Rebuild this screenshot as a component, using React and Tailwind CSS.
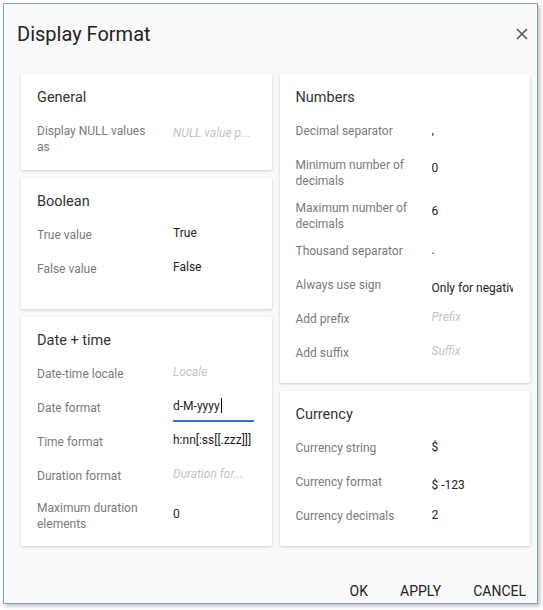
const font = { fontFamily: "Roboto, 'Liberation Sans', sans-serif" };

const Card = ({ title, children, className = "" }) => (
    <div className={"bg-white rounded-[2px] shadow-[0_1px_3px_rgba(0,0,0,0.18)] pt-[14px] px-[16px] pb-[13px] " + className}>
        <div className="h-[20px] leading-[20px] text-[14.5px] text-[#333] mb-[6px]">{title}</div>
        {children}
    </div>
);

const Row = ({ label, children, tall = false, h, labelPad = "pt-[9px]" }) => (
    <div className="flex" style={{ height: h || (tall ? 43 : 34) }}>
        <div
            className={"w-[136px] shrink-0 pr-[14px] flex text-[12px] leading-[16px] text-[#7a7a7a] " + (tall ? "items-start " + labelPad : "items-center")}
        >
            <span>{label}</span>
        </div>
        <div className="w-[81px] h-full flex items-center overflow-hidden whitespace-nowrap text-[12px] leading-[16px]">
            {children}
        </div>
    </div>
);

const Val = ({ children, pad = "pb-[5px]" }) => (
    <div className={"text-[#222] " + pad}>{children}</div>
);

const Ph = ({ children }) => (
    <div className="pb-[5px] text-[#c4c4c4] italic truncate">{children}</div>
);

const App = () => {
    return (
        <div className="w-[543px] h-[610px] bg-white" style={font}>
            <div className="absolute left-[3px] top-[3px] w-[535px] h-[601px] bg-[#f9f9f9] border border-[#7aa0cc] shadow-[2px_2px_4px_rgba(0,0,0,0.25)] flex flex-col">
                <div className="h-[60px] flex items-center justify-between pl-[13px] pr-[8px]">
                    <span className="text-[20px] text-[#222]">Display Format</span>
                    <svg width="12" height="12" viewBox="0 0 12 12" className="mr-[1px]">
                        <path d="M1 1L11 11M11 1L1 11" stroke="#555" strokeWidth="1.6" />
                    </svg>
                </div>
                <div className="pt-[10px] pl-[17px] pr-[7px] grid grid-cols-2 gap-[8px]">
                    <div className="flex flex-col gap-[8px]">
                        <Card title="General">
                            <Row label="Display NULL values as" tall>
                                <Ph>NULL value p...</Ph>
                            </Row>
                        </Card>
                        <Card title="Boolean" className="pb-[23px]">
                            <Row label="True value"><Val>True</Val></Row>
                            <Row label="False value"><Val>False</Val></Row>
                        </Card>
                        <Card title="Date + time" className="flex-1 pb-[11px]">
                            <Row label="Date-time locale"><Ph>Locale</Ph></Row>
                            <Row label="Date format">
                                <div className="w-full h-[24px] mt-[3px] border-b-2 border-[#2f6de0] flex items-start">
                                    <span className="text-[#222]">d-M-yyyy</span>
                                    <span className="inline-block w-[1px] h-[15px] bg-[#111] ml-[1px]" />
                                </div>
                            </Row>
                            <Row label="Time format"><Val>h:nn[:ss[[.zzz]]]</Val></Row>
                            <Row label="Duration format"><Ph>Duration for...</Ph></Row>
                            <Row label="Maximum duration elements" tall h={40} labelPad="pt-[7px]">
                                <Val pad="pt-[1px]">0</Val>
                            </Row>
                        </Card>
                    </div>
                    <div className="flex flex-col gap-[8px]">
                        <Card title="Numbers">
                            <Row label="Decimal separator"><Val pad="pb-[2px]">,</Val></Row>
                            <Row label="Minimum number of decimals" tall>
                                <Val pad="pb-[4px]">0</Val>
                            </Row>
                            <Row label="Maximum number of decimals" tall>
                                <Val pad="pb-[4px]">6</Val>
                            </Row>
                            <Row label="Thousand separator"><Val pad="pb-[2px]">.</Val></Row>
                            <Row label="Always use sign"><Val pad="pt-[6px]">Only for negative</Val></Row>
                            <Row label="Add prefix"><Ph>Prefix</Ph></Row>
                            <Row label="Add suffix"><Ph>Suffix</Ph></Row>
                        </Card>
                        <Card title="Currency" className="flex-1">
                            <Row label="Currency string"><Val pad="pb-[3px]">$</Val></Row>
                            <Row label="Currency format"><Val pad="pt-[5px]">$ -123</Val></Row>
                            <Row label="Currency decimals"><Val pad="pb-[3px]">2</Val></Row>
                        </Card>
                    </div>
                </div>
                <div className="pt-[35px] pr-[11px] flex justify-end gap-[32px] text-[14px] leading-[20px] text-[#222]">
                    <span>OK</span>
                    <span>APPLY</span>
                    <span>CANCEL</span>
                </div>
            </div>
        </div>
    );
};

export default App;
